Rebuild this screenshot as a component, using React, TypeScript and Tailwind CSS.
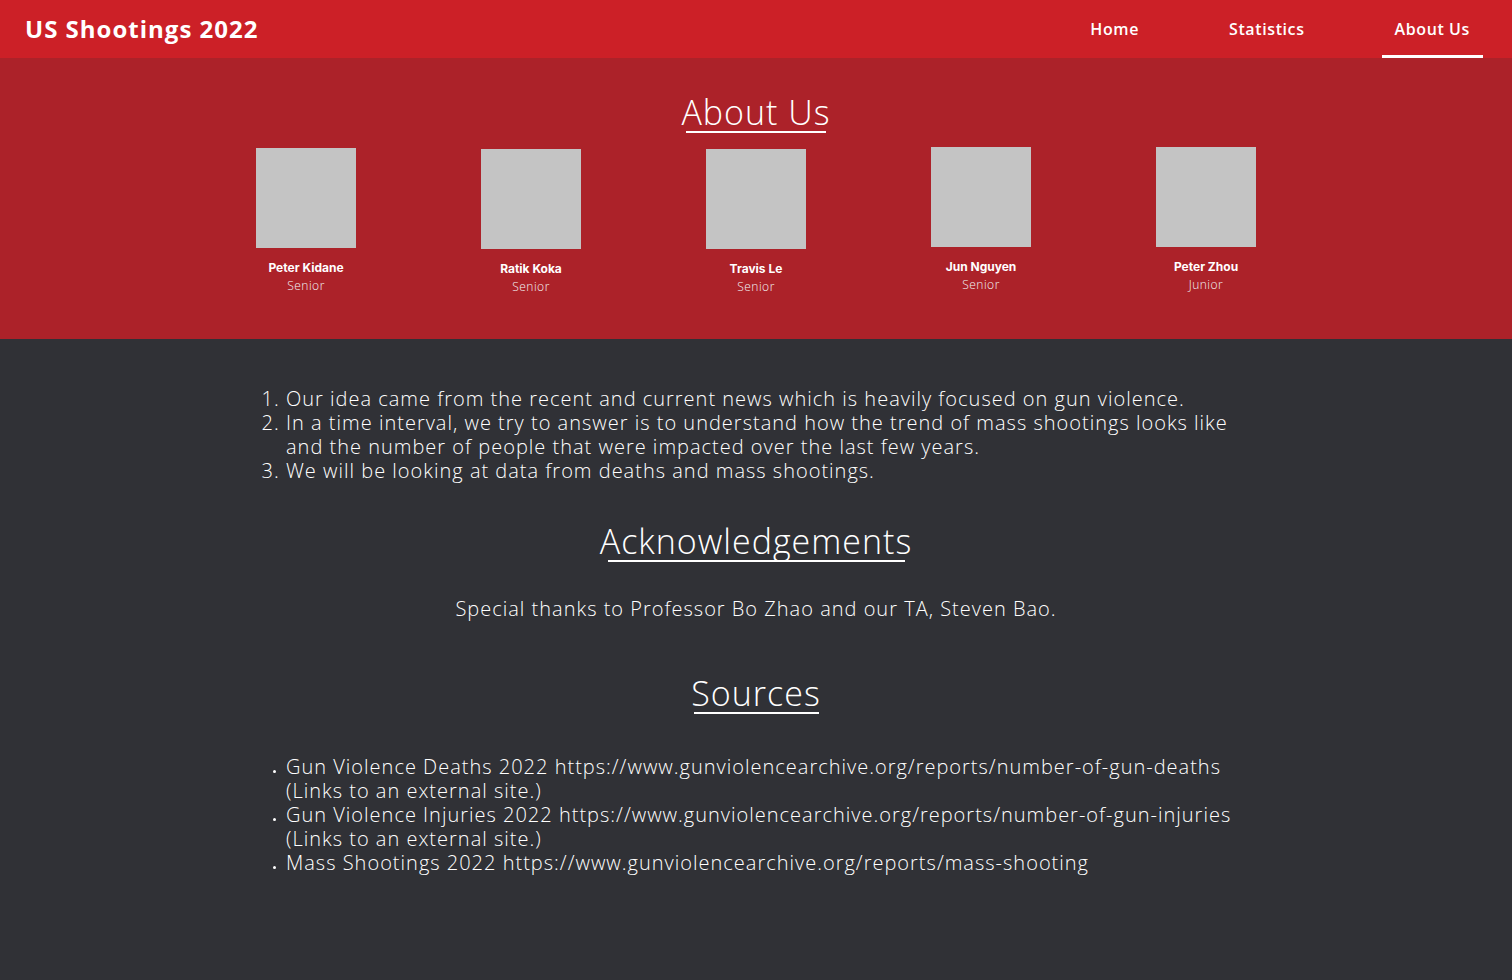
const team = [
  { name: "Peter Kidane", role: "Senior", off: "mt-0" },
  { name: "Ratik Koka", role: "Senior", off: "mt-px" },
  { name: "Travis Le", role: "Senior", off: "mt-px" },
  { name: "Jun Nguyen", role: "Senior", off: "-mt-px" },
  { name: "Peter Zhou", role: "Junior", off: "-mt-px" },
];

const Heading = ({ text, line }: { text: string; line: string }) => (
  <div className="flex flex-col items-center">
    <h2 className="text-[34px] font-light leading-[40px] tracking-[1px] text-white">{text}</h2>
    <div className={`-mt-px h-[2px] bg-white ${line}`} />
  </div>
);

const App = () => {
  return (
    <div className="min-h-screen bg-[#303136] font-['Open_Sans',sans-serif] text-white">
      <header className="flex h-[58px] items-center justify-between bg-[#cc2027] pl-[25px] pr-[29px]">
        <h1 className="text-[24px] font-bold tracking-[1px]">US Shootings 2022</h1>
        <nav className="flex h-full gap-16 text-[16px] font-semibold tracking-[0.6px]">
          <a className="flex h-full items-center px-[13px]">Home</a>
          <a className="flex h-full items-center px-[13px]">Statistics</a>
          <a className="flex h-full items-center border-b-[3px] border-white px-[13px] pt-[3px]">About Us</a>
        </nav>
      </header>

      <section className="bg-[#ac2229] pb-[44px] pt-[34px]">
        <Heading text="About Us" line="w-[140px]" />
        <div className="mt-[15px] flex justify-center">
          {team.map((m) => (
            <div key={m.name} className={`flex w-[225px] flex-col items-center ${m.off}`}>
              <div className="h-[100px] w-[100px] bg-[#c4c4c4]" />
              <p className="mt-[12px] font-['Inter',sans-serif] text-[12px] font-bold leading-[16px]">{m.name}</p>
              <p className="mt-[2px] text-[12px] font-light leading-[16px] tracking-[0.5px] text-gray-100">{m.role}</p>
            </div>
          ))}
        </div>
      </section>

      <main className="mx-auto w-[1000px] pb-[100px] pt-[48px] text-[20px] font-light leading-[24px] tracking-[1px]">
        <ol className="list-decimal pl-[30px]">
          <li>Our idea came from the recent and current news which is heavily focused on gun violence.</li>
          <li>
            In a time interval, we try to answer is to understand how the trend of mass shootings looks like
            <br />
            and the number of people that were impacted over the last few years.
          </li>
          <li>We will be looking at data from deaths and mass shootings.</li>
        </ol>

        <div className="mt-[38px]">
          <Heading text="Acknowledgements" line="w-[297px]" />
        </div>
        <p className="mt-[35px] text-center">Special thanks to Professor Bo Zhao and our TA, Steven Bao.</p>

        <div className="mt-[52px]">
          <Heading text="Sources" line="w-[125px]" />
        </div>
        <ul className="mt-[41px] list-disc pl-[30px] marker:text-[9px]">
          <li>
            Gun Violence Deaths 2022 https://www.gunviolencearchive.org/reports/number-of-gun-deaths
            <br />
            (Links to an external site.)
          </li>
          <li>
            Gun Violence Injuries 2022 https://www.gunviolencearchive.org/reports/number-of-gun-injuries
            <br />
            (Links to an external site.)
          </li>
          <li>Mass Shootings 2022 https://www.gunviolencearchive.org/reports/mass-shooting</li>
        </ul>
      </main>
    </div>
  );
};

export default App;
